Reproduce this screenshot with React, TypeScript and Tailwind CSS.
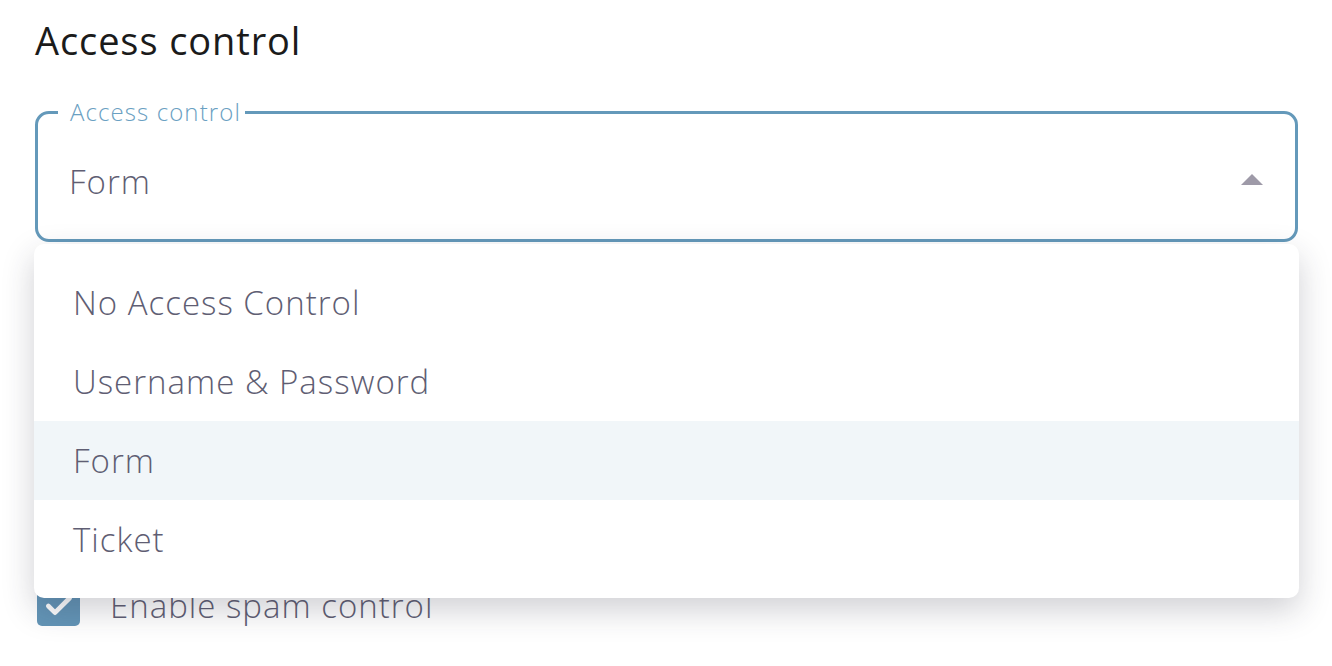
import { Check } from "lucide-react";

const options = ["No Access Control", "Username & Password", "Form", "Ticket"];

export default function App() {
  const selected = "Form";

  return (
    <div className="h-[666px] overflow-hidden bg-white pl-[35px] pr-[34px] pt-[14px] font-['Open_Sans',sans-serif]">
      <h2 className="text-[38px] leading-[52px] tracking-[0.9px] text-[#1b1b1b]">
        Access control
      </h2>

      {/* Select field */}
      <div className="relative mt-[34px]">
        <fieldset className="m-0 h-[142px] rounded-[14px] border-[3px] border-[#6499ba] pl-[20px] pr-[30px]">
          <legend className="pl-[12px] pr-[4px] text-[24px] leading-[24px] font-light tracking-[1.1px] text-[#6aa0c2]">
            Access control
          </legend>
          <div className="flex h-[115px] items-center justify-between pl-[11px]">
            <span className="text-[33px] font-light tracking-[1px] text-[#5f5e73]">{selected}</span>
            <span className="mr-[2px] mt-[-4px] h-0 w-0 border-x-[11.5px] border-b-[11px] border-x-transparent border-b-[#9e9aa8]" />
          </div>
        </fieldset>

        {/* Dropdown menu */}
        <div className="absolute left-[-1px] right-[-1px] top-[144px] z-10 rounded-[10px] bg-white py-[19px] shadow-[0_12px_32px_rgba(40,40,60,0.22)]">
          {options.map((o) => (
            <div
              key={o}
              className={`flex h-[79px] items-center pl-[39px] text-[33px] font-light tracking-[1px] text-[#5f5e73] ${
                o === selected ? "bg-[#f1f6f9]" : ""
              }`}
            >
              {o}
            </div>
          ))}
        </div>
      </div>

      <div className="h-[344px]" />

      <div className="flex h-[40px] items-center gap-[30px]">
        <span className="ml-[2px] flex h-[40px] w-[43px] items-center justify-center rounded-[5px] bg-[#6395b7]">
          <Check size={32} strokeWidth={3.5} className="text-white" />
        </span>
        <span className="text-[33px] font-light tracking-[1px] text-[#5f5e73]">Enable spam control</span>
      </div>
    </div>
  );
}
